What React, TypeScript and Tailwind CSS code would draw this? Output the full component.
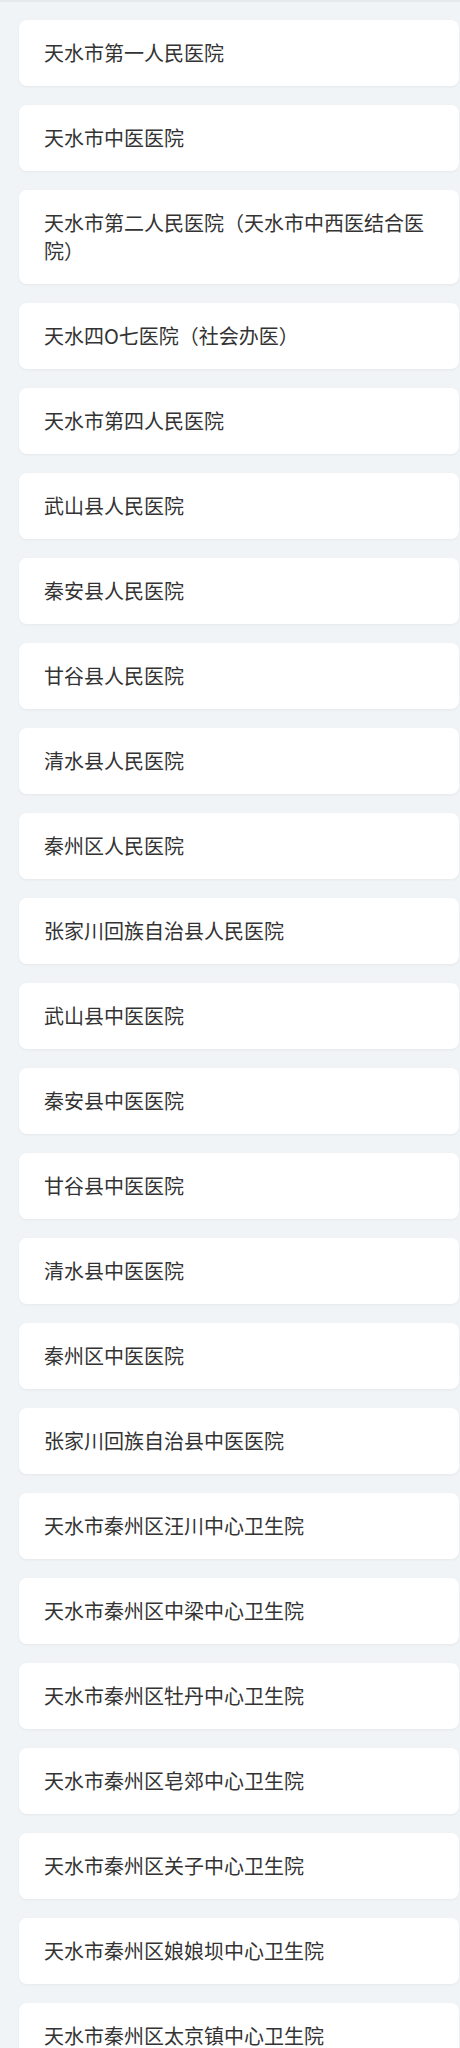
const hospitals = [
  "天水市第一人民医院",
  "天水市中医医院",
  "天水市第二人民医院（天水市中西医结合医院）",
  "天水四O七医院（社会办医）",
  "天水市第四人民医院",
  "武山县人民医院",
  "秦安县人民医院",
  "甘谷县人民医院",
  "清水县人民医院",
  "秦州区人民医院",
  "张家川回族自治县人民医院",
  "武山县中医医院",
  "秦安县中医医院",
  "甘谷县中医医院",
  "清水县中医医院",
  "秦州区中医医院",
  "张家川回族自治县中医医院",
  "天水市秦州区汪川中心卫生院",
  "天水市秦州区中梁中心卫生院",
  "天水市秦州区牡丹中心卫生院",
  "天水市秦州区皂郊中心卫生院",
  "天水市秦州区关子中心卫生院",
  "天水市秦州区娘娘坝中心卫生院",
  "天水市秦州区太京镇中心卫生院",
  "天水市秦州区杨家寺中心卫生院",
];

export default function App() {
  return (
    <div
      className="min-h-screen bg-[#f0f4f7] border-t-2 border-[#e4e9ed] pt-[18px] pl-[19px] pr-[1px] pb-5"
      style={{ fontFamily: '"Microsoft YaHei", "Noto Sans CJK SC", sans-serif' }}
    >
      {/* hospital list */}
      <div className="flex flex-col gap-[19px]">
        {hospitals.map((name) => (
          <div
            key={name}
            className="rounded-lg bg-white px-[25px] py-[19px] text-[20px] leading-[28px] text-[#333333] shadow-[0_1px_3px_rgba(0,0,0,0.05)]"
          >
            {name}
          </div>
        ))}
      </div>
    </div>
  );
}
